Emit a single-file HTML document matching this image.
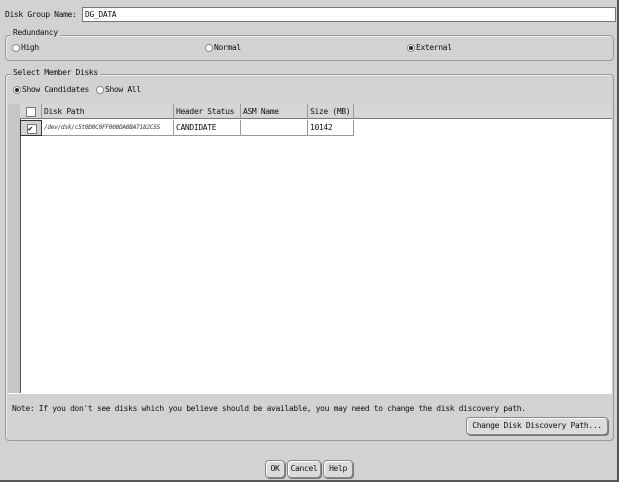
<!DOCTYPE html><html><head><style>
body{margin:0;width:620px;height:483px;background:#fff;overflow:hidden;font-family:"DejaVu Sans Mono","Liberation Mono",monospace;font-size:8px;letter-spacing:-0.35px;color:#111}
.win{position:absolute;left:0;top:0;width:617px;height:480px;background:#d2d2d2;border-right:2px solid #555;border-bottom:2px solid #555}
.a{position:absolute;white-space:nowrap}
.box{position:absolute;border:1px solid #9a9a9a;border-radius:4px;box-shadow:inset 1px 1px 0 #eee}
.lbl{position:absolute;background:#d2d2d2;padding:0 2px}
.rad{position:absolute;width:6px;height:6px;border-radius:50%;background:#fff;border:1px solid #888}
.rad.on::after{content:"";position:absolute;left:1px;top:1px;width:4px;height:4px;border-radius:50%;background:#222}
.btn{position:absolute;border:1px solid #888;border-radius:4px;background:#dcdcdc;box-shadow:1px 1px 0 #777,inset 1px 1px 0 #fff;text-align:center;line-height:16px}
.th{position:absolute;top:104px;height:15px;border-right:1px solid #999;border-bottom:1px solid #777;line-height:15px;padding-left:2px;box-sizing:border-box;background:#d6d6d6;white-space:nowrap}
.td{position:absolute;top:120px;height:16px;border-right:1px solid #999;border-bottom:1px solid #999;line-height:16px;padding-left:2px;box-sizing:border-box;background:#fff;white-space:nowrap;overflow:hidden}
</style></head><body><div class="win">
<div class="a" style="left:5px;top:10px">Disk Group Name:</div>
<div class="a" style="left:82px;top:7px;width:530px;height:13px;background:#fff;border:1px solid #777;line-height:13px;padding-left:2px">DG_DATA</div>

<div class="box" style="left:5px;top:35px;width:607px;height:24px"></div>
<div class="lbl a" style="left:11px;top:28px">Redundancy</div>
<div class="rad" style="left:12px;top:44px"></div><div class="a" style="left:21px;top:43px">High</div>
<div class="rad" style="left:205px;top:44px"></div><div class="a" style="left:214px;top:43px">Normal</div>
<div class="rad on" style="left:407px;top:44px"></div><div class="a" style="left:416px;top:43px">External</div>

<div class="box" style="left:5px;top:74px;width:607px;height:365px"></div>
<div class="lbl a" style="left:11px;top:68px">Select Member Disks</div>
<div class="rad on" style="left:13px;top:86px"></div><div class="a" style="left:22px;top:85px">Show Candidates</div>
<div class="rad" style="left:96px;top:86px"></div><div class="a" style="left:105px;top:85px">Show All</div>

<div class="a" style="left:8px;top:104px;width:604px;height:289px;background:#fff;border-top:1px solid #999"></div>
<div class="a" style="left:8px;top:104px;width:12px;height:289px;background:#c6c6c6;border-right:1px solid #555"></div>
<div class="th" style="left:20px;width:22px"><div style="position:absolute;left:6px;top:3px;width:8px;height:8px;background:#fff;border:1px solid #777"></div></div>
<div class="th" style="left:42px;width:132px">Disk Path</div>
<div class="th" style="left:174px;width:67px">Header Status</div>
<div class="th" style="left:241px;width:67px">ASM Name</div>
<div class="th" style="left:308px;width:46px">Size (MB)</div>
<div class="th" style="left:354px;width:258px;border-right:none"></div>
<div class="td" style="left:20px;width:22px;background:#d2d2d2;border:1px solid #333"><div style="position:absolute;left:6px;top:3px;width:8px;height:8px;background:#fff;border:1px solid #777;font-size:8px;line-height:8px">✔</div></div>
<div class="td" style="left:42px;width:132px;font-size:6px;letter-spacing:-0.2px;color:#333;font-style:italic">/dev/dsk/c5t0D0C0FF000DA0BA7182C5S</div>
<div class="td" style="left:174px;width:67px">CANDIDATE</div>
<div class="td" style="left:241px;width:67px"></div>
<div class="td" style="left:308px;width:46px">10142</div>

<div class="a" style="left:12px;top:404px">Note: If you don't see disks which you believe should be available, you may need to change the disk discovery path.</div>
<div class="btn" style="left:466px;top:417px;width:140px;height:16px">Change Disk Discovery Path...</div>

<div class="btn" style="left:265px;top:460px;width:18px;height:16px">OK</div>
<div class="btn" style="left:287px;top:460px;width:32px;height:16px">Cancel</div>
<div class="btn" style="left:323px;top:460px;width:28px;height:16px">Help</div>
</div></body></html>
